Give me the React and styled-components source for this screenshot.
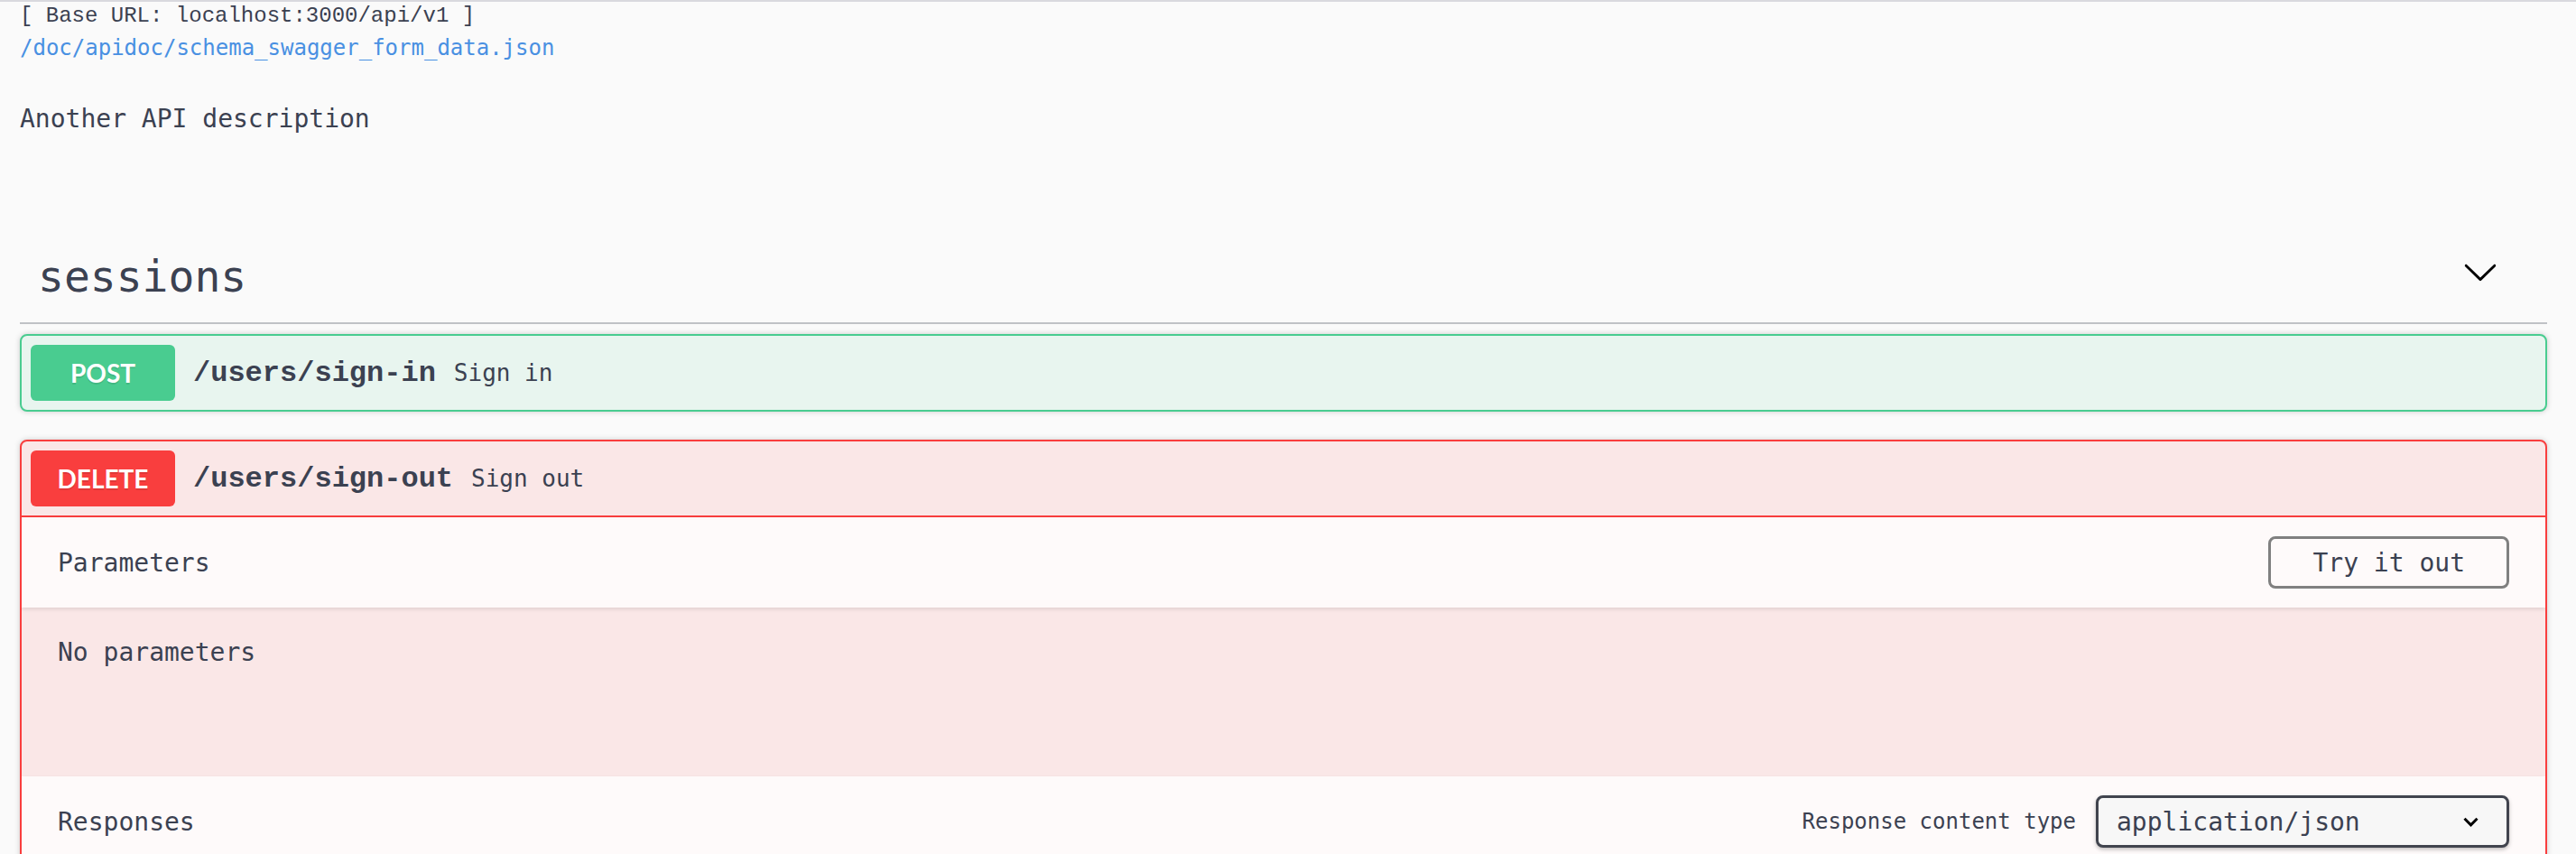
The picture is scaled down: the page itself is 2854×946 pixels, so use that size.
import React from 'react';
import styled, { createGlobalStyle } from 'styled-components';

const GlobalStyle = createGlobalStyle`
  html, body {
    margin: 0;
    padding: 0;
    background: #fafafa;
    overflow: hidden;
  }
  body {
    font-family: "DejaVu Sans Mono", monospace;
    color: #3b4151;
  }
`;

const colors = {
  text: '#3b4151',
  link: '#4990e2',
  post: '#49cc90',
  postBg: '#e8f5ef',
  delete: '#f93e3e',
  deleteBg: '#fae7e7',
};

const Page = styled.div`
  border-top: 2px solid #d9d9de;
  padding: 0 32px 0 22px;
`;

const BaseUrl = styled.pre`
  margin: 0;
  padding-top: 1px;
  font-family: "Liberation Mono", monospace;
  font-size: 24px;
  line-height: 29px;
  color: ${colors.text};
`;

const SpecLink = styled.a`
  display: block;
  margin-top: 3px;
  font-size: 24px;
  line-height: 36px;
  color: ${colors.link};
  text-decoration: none;
`;

const Description = styled.p`
  margin: 41px 0 0;
  font-size: 28px;
  line-height: 40px;
`;

const TagSection = styled.section`
  margin-top: 95px;
`;

const TagHeader = styled.div`
  display: flex;
  align-items: center;
  padding: 24px 54px 16px 20px;
  margin-bottom: 11px;
  border-bottom: 2px solid rgba(59, 65, 81, 0.3);
`;

const TagTitle = styled.h3`
  flex: 1;
  margin: 0;
  font-size: 48px;
  line-height: 70px;
  font-weight: normal;
`;

const ExpandButton = styled.button`
  width: 40px;
  height: 40px;
  padding: 0;
  margin-bottom: 10px;
  border: none;
  background: none;
  display: flex;
`;

const Opblock = styled.div`
  border: 2px solid ${(p) => p.$color};
  background: ${(p) => p.$bg};
  border-radius: 8px;
  box-shadow: 0 0 6px rgba(0, 0, 0, 0.19);
  margin-bottom: 31px;
  overflow: hidden;
`;

const Summary = styled.div`
  display: flex;
  align-items: center;
  padding: 10px;
  border-bottom: ${(p) => (p.$open ? `2px solid ${p.$color}` : 'none')};
`;

const MethodBadge = styled.span`
  min-width: 160px;
  height: 62px;
  display: flex;
  align-items: center;
  justify-content: center;
  background: ${(p) => p.$color};
  border-radius: 6px;
  font-family: Lato, "Open Sans", sans-serif;
  font-weight: 700;
  font-size: 28px;
  color: #fff;
  text-shadow: 0 2px 0 rgba(0, 0, 0, 0.1);
`;

const Path = styled.span`
  padding: 0 20px;
  font-family: "Liberation Mono", monospace;
  font-weight: 700;
  font-size: 32px;
  color: ${colors.text};
`;

const SummaryText = styled.span`
  font-size: 26px;
  color: ${colors.text};
`;

const SectionHeader = styled.div`
  display: flex;
  align-items: center;
  box-sizing: border-box;
  min-height: 100px;
  padding: 16px 40px;
  background: rgba(255, 255, 255, 0.8);
  box-shadow: 0 2px 4px rgba(0, 0, 0, 0.1);
`;

const SectionTitle = styled.h4`
  flex: 1;
  margin: 0;
  font-size: 28px;
  font-weight: normal;
`;

const TryButton = styled.button`
  height: 58px;
  padding: 0 46px;
  border: 3px solid #808080;
  border-radius: 8px;
  background: transparent;
  font-family: "DejaVu Sans Mono", monospace;
  font-size: 28px;
  color: ${colors.text};
`;

const ParamBody = styled.div`
  padding: 30px 40px 117px;
  font-size: 28px;
  line-height: 40px;
`;

const ContentTypeLabel = styled.span`
  margin-right: 22px;
  font-size: 24px;
`;

const SelectBox = styled.div`
  display: flex;
  align-items: center;
  box-sizing: border-box;
  width: 458px;
  height: 58px;
  padding: 0 31px 0 20px;
  border: 3px solid #41444e;
  border-radius: 8px;
  background: #f7f7f7;
  box-shadow: 0 2px 4px rgba(0, 0, 0, 0.25);
  font-size: 28px;

  span {
    flex: 1;
  }
`;

const ResponsesBody = styled.div`
  height: 200px;
`;

const ArrowDown = () => (
  <svg width="40" height="40" viewBox="0 0 20 20">
    <path
      fill="#000"
      d="M17.418 6.109c.272-.268.709-.268.979 0s.271.701 0 .969l-7.908 7.83c-.27.268-.707.268-.979 0l-7.908-7.83c-.27-.268-.27-.701 0-.969.271-.268.709-.268.979 0L10 13.25l7.418-7.141z"
    />
  </svg>
);

const SelectCaret = () => (
  <svg width="17" height="11" viewBox="0 0 17 11">
    <polyline
      points="1.5,1.8 8.5,8.8 15.5,1.8"
      fill="none"
      stroke="#000"
      strokeWidth="3"
    />
  </svg>
);

const App = () => (
  <>
    <GlobalStyle />
    <Page>
      <BaseUrl>[ Base URL: localhost:3000/api/v1 ]</BaseUrl>
      <SpecLink href="#">/doc/apidoc/schema_swagger_form_data.json</SpecLink>
      <Description>Another API description</Description>

      <TagSection>
        <TagHeader>
          <TagTitle>sessions</TagTitle>
          <ExpandButton aria-label="collapse">
            <ArrowDown />
          </ExpandButton>
        </TagHeader>

        <Opblock $color={colors.post} $bg={colors.postBg}>
          <Summary>
            <MethodBadge $color={colors.post}>POST</MethodBadge>
            <Path>/users/sign-in</Path>
            <SummaryText>Sign in</SummaryText>
          </Summary>
        </Opblock>

        <Opblock $color={colors.delete} $bg={colors.deleteBg}>
          <Summary $open $color={colors.delete}>
            <MethodBadge $color={colors.delete}>DELETE</MethodBadge>
            <Path>/users/sign-out</Path>
            <SummaryText>Sign out</SummaryText>
          </Summary>
          <SectionHeader>
            <SectionTitle>Parameters</SectionTitle>
            <TryButton>Try it out</TryButton>
          </SectionHeader>
          <ParamBody>No parameters</ParamBody>
          <SectionHeader>
            <SectionTitle>Responses</SectionTitle>
            <ContentTypeLabel>Response content type</ContentTypeLabel>
            <SelectBox>
              <span>application/json</span>
              <SelectCaret />
            </SelectBox>
          </SectionHeader>
          <ResponsesBody />
        </Opblock>
      </TagSection>
    </Page>
  </>
);

export default App;
